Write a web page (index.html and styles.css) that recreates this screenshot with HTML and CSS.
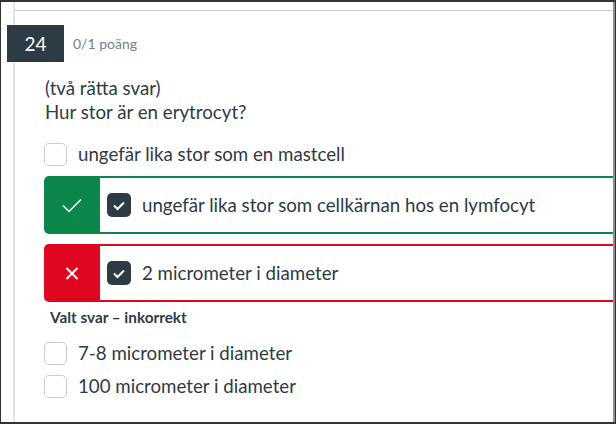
FILE: index.html
```html
<!DOCTYPE html>
<html lang="sv">
<head>
<meta charset="utf-8">
<title>Fråga 24</title>
<link rel="stylesheet" href="styles.css">
</head>
<body>
<div class="frame">
  <div class="col">
    <div class="sheet">
      <div class="header">
        <div class="qnum">24</div>
        <div class="points">0/1 poäng</div>
      </div>
      <div class="qtext">
        <div>(två rätta svar)</div>
        <div>Hur stor är en erytrocyt?</div>
      </div>
      <div class="answers">
        <div class="opt">
          <span class="box"></span>
          <span class="label">ungefär lika stor som en mastcell</span>
        </div>
        <div class="result correct">
          <div class="flag">
            <svg width="20" height="15" viewBox="0 0 20 15"><path d="M1 7.5 L7 13.5 L19 1.5" fill="none" stroke="#fff" stroke-width="1.5"/></svg>
          </div>
          <div class="body">
            <span class="box checked">
              <svg width="14" height="11" viewBox="0 0 14 11"><path d="M2 5.5 L5.5 9 L12 2.5" fill="none" stroke="#fff" stroke-width="2"/></svg>
            </span>
            <span class="label">ungefär lika stor som cellkärnan hos en lymfocyt</span>
          </div>
        </div>
        <div class="result wrong">
          <div class="flag">
            <svg width="14" height="13" viewBox="0 0 14 13"><path d="M1.5 1 L12.5 12 M12.5 1 L1.5 12" fill="none" stroke="#fff" stroke-width="2"/></svg>
          </div>
          <div class="body">
            <span class="box checked">
              <svg width="14" height="11" viewBox="0 0 14 11"><path d="M2 5.5 L5.5 9 L12 2.5" fill="none" stroke="#fff" stroke-width="2"/></svg>
            </span>
            <span class="label">2 micrometer i diameter</span>
          </div>
        </div>
        <div class="note">Valt svar – inkorrekt</div>
        <div class="opt first-after">
          <span class="box"></span>
          <span class="label">7-8 micrometer i diameter</span>
        </div>
        <div class="opt">
          <span class="box"></span>
          <span class="label">100 micrometer i diameter</span>
        </div>
      </div>
    </div>
  </div>
</div>
</body>
</html>
```
FILE: styles.css
```css
* { box-sizing: border-box; }
html, body { margin: 0; padding: 0; }
body {
  font-family: Lato, "Noto Sans", sans-serif;
  color: #2d3b45;
  background: #fff;
}
.frame {
  width: 616px;
  height: 424px;
  border-top: 2px solid #333;
  border-bottom: 2px solid #333;
  border-left: 1px solid #333;
  border-right: 1px solid #333;
  padding-left: 12px;
  display: flex;
  overflow: hidden;
}
.col {
  flex: 1;
  min-width: 0;
  border-left: 2px solid #e4e4e4;
  border-right: 2px solid #8e8e8e;
  padding-top: 8px;
}
.sheet {
  border-top: 1px solid #cccccc;
  height: 100%;
}
.header {
  display: flex;
  align-items: center;
  margin-top: 14px;
  margin-left: -8px;
}
.qnum {
  width: 57px;
  height: 37px;
  background: #2d3b45;
  color: #fff;
  font-size: 19px;
  display: flex;
  align-items: center;
  justify-content: center;
}
.points {
  margin-left: 9px;
  font-size: 14px;
  color: #73818c;
}
.qtext {
  margin-top: 14px;
  margin-left: 30px;
  font-size: 18.7px;
  line-height: 24px;
}
.answers {
  margin-top: 18px;
  margin-left: 29px;
  font-size: 18.7px;
  line-height: 24px;
  overflow: hidden;
}
.opt {
  display: flex;
  align-items: center;
  height: 24px;
  margin-bottom: 9px;
}
.box {
  width: 23px;
  height: 23px;
  border: 1px solid #c7cdd1;
  border-radius: 5px;
  background: #fff;
  flex: none;
  display: flex;
  align-items: center;
  justify-content: center;
}
.box.checked {
  width: 24px;
  height: 24px;
  border: none;
  background: #2d3b45;
}
.opt .label { margin-left: 11px; }
.result {
  display: flex;
  height: 58px;
  width: 640px;
  margin-top: 10px;
}
.flag {
  width: 56px;
  flex: none;
  border-radius: 5px 0 0 5px;
  display: flex;
  align-items: center;
  justify-content: center;
}
.body {
  flex: 1;
  display: flex;
  align-items: center;
  padding-left: 7px;
  border-top: 2px solid;
  border-bottom: 2px solid;
}
.body .label { margin-left: 11px; }
.correct .flag { background: #0b874b; }
.correct .body { border-color: #0b874b; }
.wrong .flag { background: #e0061f; }
.wrong .body { border-color: #e0061f; }
.note {
  margin-top: 5px;
  margin-left: 6px;
  font-size: 15.3px;
  line-height: 20px;
  font-weight: bold;
}
.first-after { margin-top: 14px; }
```
